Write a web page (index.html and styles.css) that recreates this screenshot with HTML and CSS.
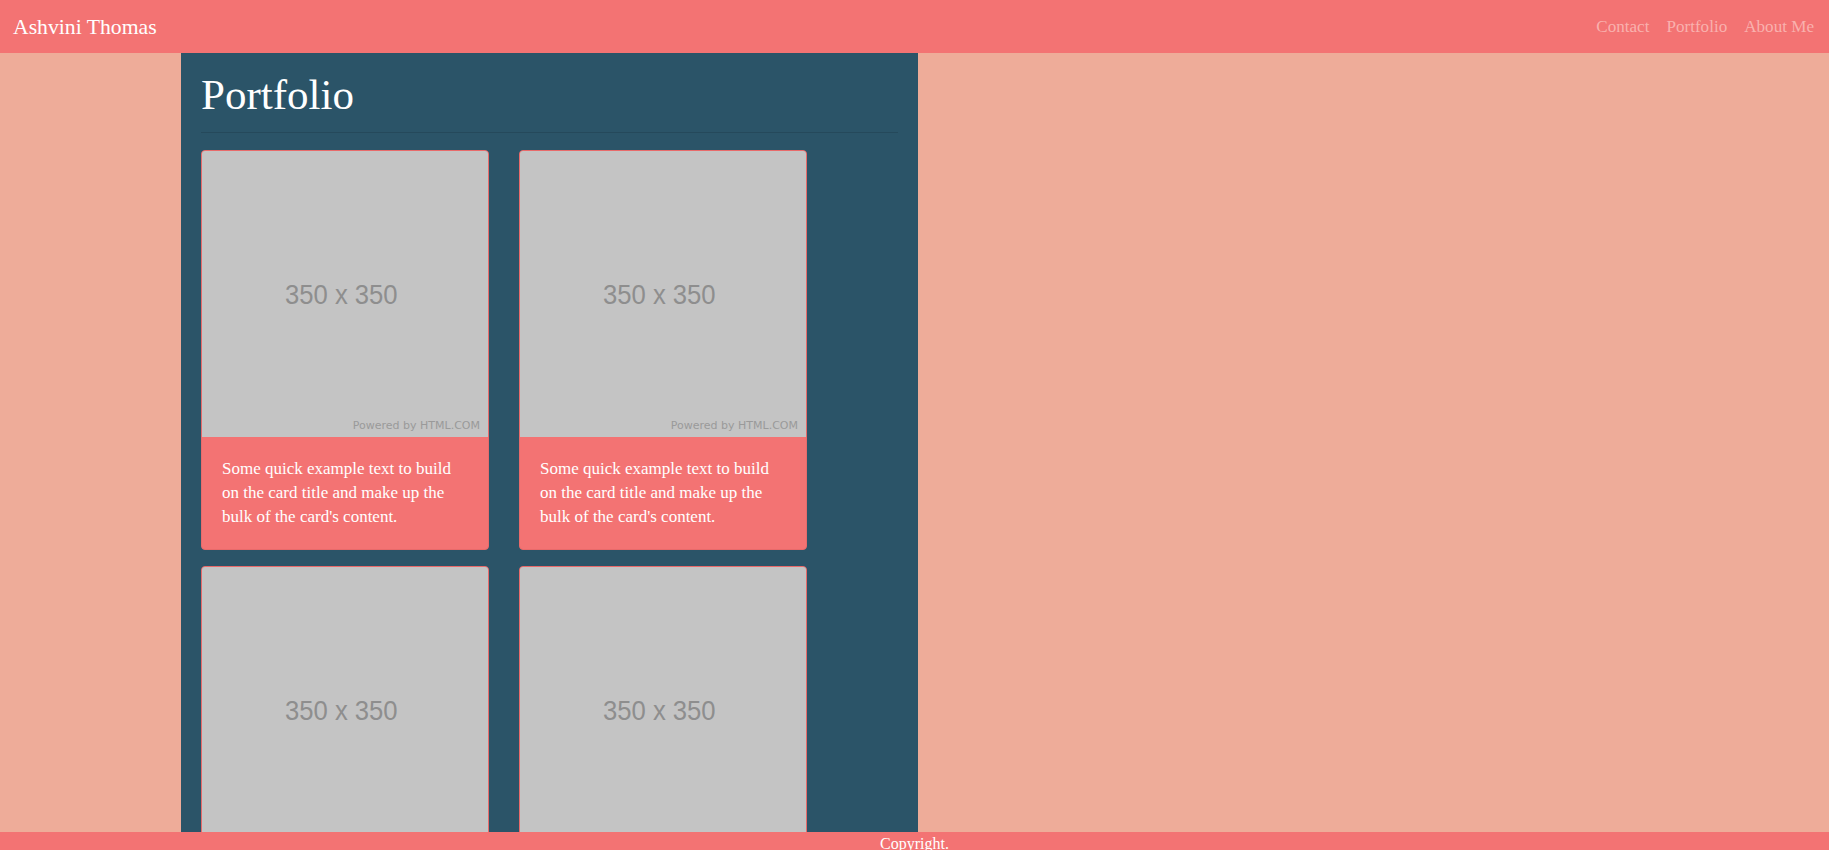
FILE: index.html
```html
<!DOCTYPE html>
<html lang="en">
<head>
<meta charset="utf-8">
<title>Ashvini Thomas</title>
<link rel="stylesheet" href="styles.css">
</head>
<body>
<nav class="navbar">
  <a class="brand" href="#">Ashvini Thomas</a>
  <ul class="nav-links">
    <li><a href="#">Contact</a></li>
    <li><a href="#">Portfolio</a></li>
    <li><a href="#">About Me</a></li>
  </ul>
</nav>
<main class="page">
  <section class="column">
    <h1 class="title">Portfolio</h1>
    <hr class="rule">
    <div class="cards">
      <div class="card">
        <div class="thumb"><span class="thumb-size">350 x 350</span><span class="thumb-credit">Powered by HTML.COM</span></div>
        <div class="card-body">Some quick example text to build on the card title and make up the bulk of the card's content.</div>
      </div>
      <div class="card">
        <div class="thumb"><span class="thumb-size">350 x 350</span><span class="thumb-credit">Powered by HTML.COM</span></div>
        <div class="card-body">Some quick example text to build on the card title and make up the bulk of the card's content.</div>
      </div>
      <div class="card">
        <div class="thumb"><span class="thumb-size">350 x 350</span><span class="thumb-credit">Powered by HTML.COM</span></div>
        <div class="card-body">Some quick example text to build on the card title and make up the bulk of the card's content.</div>
      </div>
      <div class="card">
        <div class="thumb"><span class="thumb-size">350 x 350</span><span class="thumb-credit">Powered by HTML.COM</span></div>
        <div class="card-body">Some quick example text to build on the card title and make up the bulk of the card's content.</div>
      </div>
    </div>
  </section>
</main>
<footer class="footer">Copyright.</footer>
</body>
</html>
```

FILE: styles.css
```css
html, body {
  margin: 0;
  padding: 0;
}
html {
  overflow: hidden;
}
body {
  background: #eeac99;
  font-family: "Liberation Serif", "DejaVu Serif", serif;
  color: #ffffff;
  height: 100vh;
  display: flex;
  flex-direction: column;
}
.navbar {
  flex: none;
  height: 53px;
  background: #f37373;
  display: flex;
  align-items: center;
  justify-content: space-between;
  padding: 0 15px 0 13px;
}
.brand {
  color: #ffffff;
  text-decoration: none;
  font-size: 21.7px;
  line-height: 24px;
  margin-top: 1px;
}
.nav-links {
  list-style: none;
  margin: 0;
  padding: 0;
  display: flex;
  gap: 17px;
}
.nav-links a {
  color: #f9b1ae;
  text-decoration: none;
  font-size: 17.1px;
  line-height: 24px;
}
.page {
  flex: 1;
  display: flex;
  padding-left: 181px;
}
.column {
  width: 737px;
  background: #2b5468;
  padding: 17px 20px 0 20px;
  box-sizing: border-box;
}
.title {
  margin: 0;
  font-weight: normal;
  font-size: 43px;
  line-height: 50px;
}
.rule {
  margin: 12px 0 17px 0;
  border: 0;
  border-top: 1px solid rgba(0, 0, 0, 0.12);
}
.cards {
  display: grid;
  grid-template-columns: 288px 288px;
  column-gap: 30px;
  row-gap: 16px;
}
.card {
  border: 1px solid #e86a6a;
  border-radius: 4px;
  overflow: hidden;
  background: #f37373;
}
.thumb {
  height: 286px;
  background: #c4c4c4;
  display: flex;
  align-items: center;
  justify-content: center;
  position: relative;
}
.thumb-size {
  font-family: "Liberation Sans", Arial, sans-serif;
  font-size: 27px;
  color: #8e8e8e;
  transform: scaleX(0.95);
  margin: 2px 7px 0 0;
}
.thumb-credit {
  position: absolute;
  right: 8px;
  bottom: 5px;
  font-family: "DejaVu Sans", Verdana, sans-serif;
  font-size: 11px;
  color: #9a9a9a;
}
.card-body {
  padding: 20px;
  font-size: 17px;
  line-height: 24px;
  color: #ffffff;
}
.footer {
  position: fixed;
  left: 0;
  right: 0;
  bottom: 0;
  height: 18px;
  overflow: hidden;
  background: #f37373;
  text-align: center;
  font-size: 16px;
  line-height: 24px;
  color: #ffffff;
}
```
